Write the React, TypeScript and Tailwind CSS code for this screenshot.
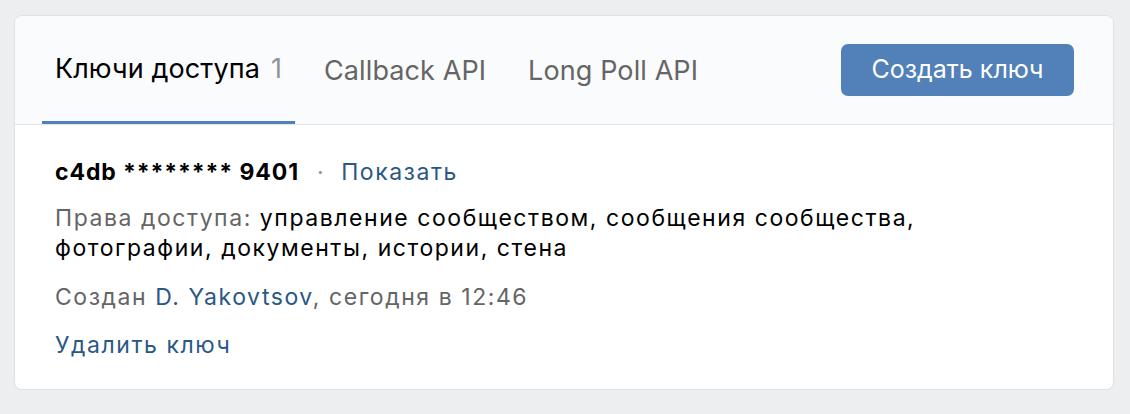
export default function App() {
  return (
    <div className="min-h-[414px] bg-[#edeef0] pl-[14px] pr-[16px] pt-[15px] font-['Inter',sans-serif]">
      <div className="h-[375px] overflow-hidden rounded-[8px] border border-[#dfe1e6] bg-white">
        <div className="flex h-[109px] items-stretch border-b border-[#e3e5e9] bg-[#fafbfc] pl-[27px] pr-[39px]">
          <div className="flex gap-[16px] tracking-[0.1px]">
            <div className="flex items-center border-b-[3px] border-[#5181b8] px-[13px] pt-[2px] text-[27px] text-black">
              Ключи доступа<span className="ml-[11px] text-[#939393]">1</span>
            </div>
            <div className="flex items-center px-[13px] pt-[2px] text-[27px] text-[#656565]">Callback API</div>
            <div className="flex items-center px-[13px] pt-[2px] text-[27px] text-[#656565]">Long Poll API</div>
          </div>
          <div className="ml-auto flex items-center">
            <button className="h-[52px] w-[233px] rounded-[7px] bg-[#5181b8] text-[25px] text-white">Создать ключ</button>
          </div>
        </div>
        <div className="px-[40px] pt-[32px] text-[23px] leading-[30px] tracking-[1.55px]">
          <div className="flex items-center">
            <span className="font-bold tracking-[0.9px] text-black">c4db ******** 9401</span>
            <span className="ml-[18px] mr-[16px] text-[#939393]">·</span>
            <span className="text-[#2a5885]">Показать</span>
          </div>
          <div className="mt-[16px] text-black">
            <span className="text-[#656565]">Права доступа:</span> управление сообществом, сообщения сообщества,
            <br />
            фотографии, документы, истории, стена
          </div>
          <div className="mt-[19px] text-[#656565]">
            Создан <span className="text-[#2a5885]">D. Yakovtsov</span>, сегодня в 12:46
          </div>
          <div className="mt-[18px] text-[#2a5885]">Удалить ключ</div>
        </div>
      </div>
    </div>
  );
}
